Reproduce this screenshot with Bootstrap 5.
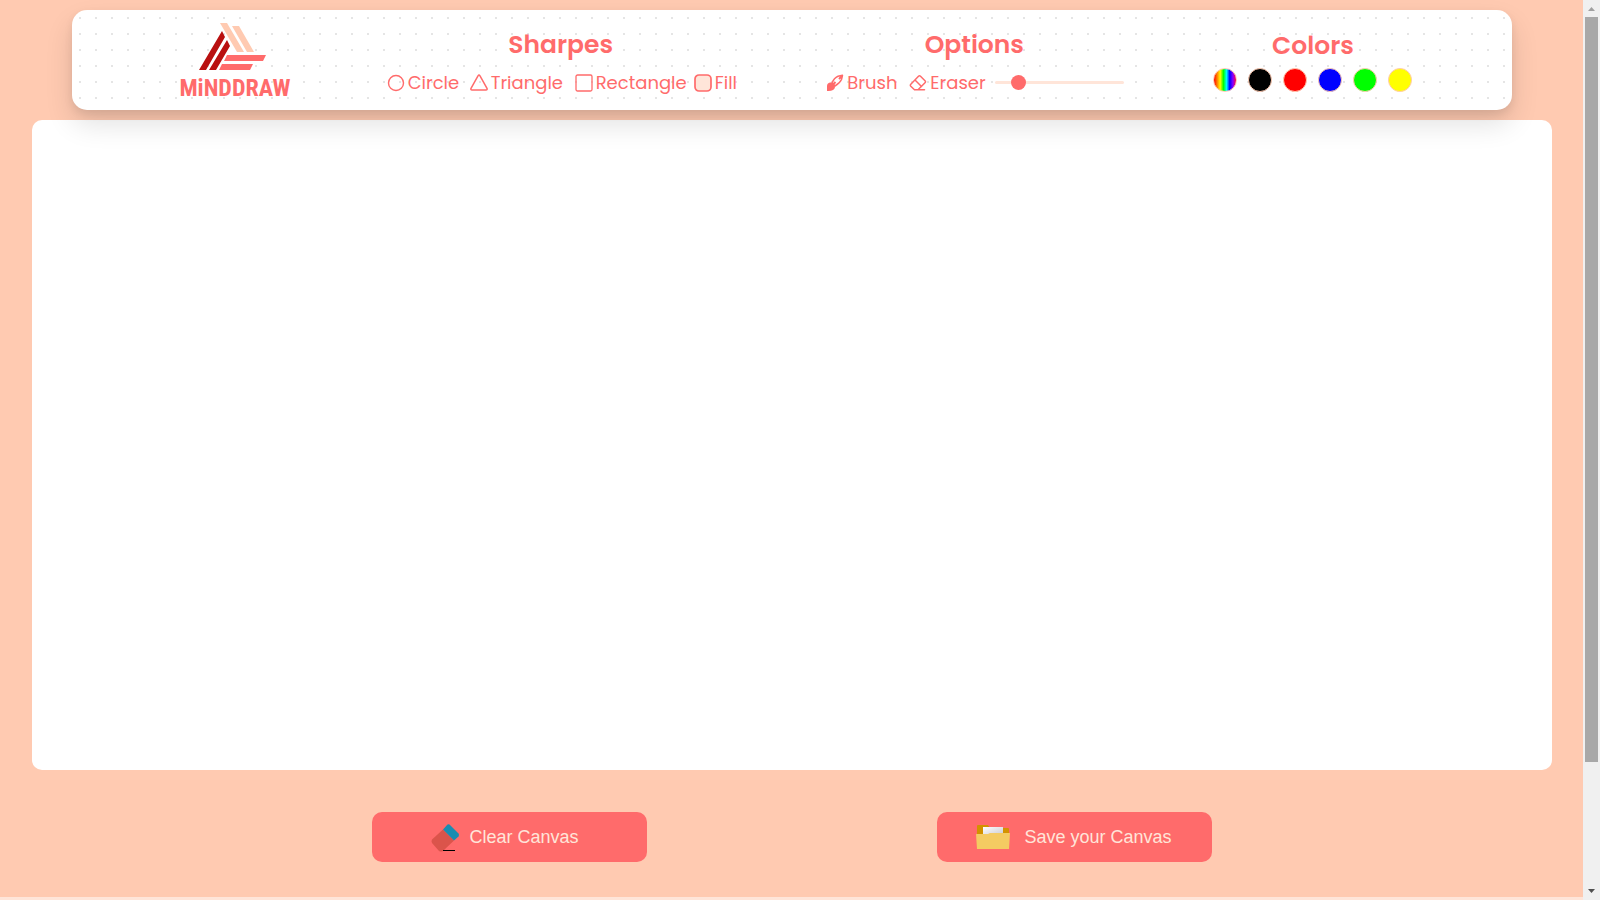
<!DOCTYPE html>
<html lang="en">
<head>
<meta charset="utf-8">
<meta name="viewport" content="width=device-width, initial-scale=1">
<title>MindDraw</title>
<link rel="stylesheet" href="https://cdn.jsdelivr.net/npm/bootstrap@5.3.0/dist/css/bootstrap.min.css">
<style>
:root { --coral: #ff6b6b; --peach: #ffcab1; --cream: #ffe5d9; }
body { background: var(--cream); font-family: Poppins, Inter, sans-serif; color: var(--coral); }
.studio { background: var(--peach); min-height: 0; }
.toolbar {
  height: 100px; margin: 10px 71px 10px 72px; padding: 0 99px 0 105px; border-radius: 15px;
  background: #fff radial-gradient(#e5e5e5 1px, transparent 1px) 0 0 / 16px 16px;
  box-shadow: 0 14px 28px rgba(0, 0, 0, .12), 0 4px 8px rgba(0, 0, 0, .08);
}
.brand { width: 116px; margin-right: 3px; color: var(--coral); }
.brand:hover { color: var(--coral); }
.brand-name { font: bold 24px/28px "Roboto Condensed", "Open Sans Condensed", "Liberation Sans", sans-serif; }
.tool-title { font-size: 25px; line-height: 30px; font-weight: 600; padding-top: 20px; }
.tool-row { height: 24px; margin-top: 11px; padding-left: 1px; }
.shapes { width: 350px; }
.options { width: 298px; }
.colors { width: 200px; }
.colors .tool-title { padding-top: 21px; }
.shape-list { display: grid; grid-template-columns: 83px 105px 119px auto; }
.option-list { display: grid; grid-template-columns: 83px 86px 129px; }
.tool { display: flex; align-items: center; gap: 3px; padding: 0; border: 0; background: none; color: inherit; font-size: 18px; line-height: 24px; white-space: nowrap; }
.tool svg { width: 18px; height: 18px; flex: none; }
.size-slot { height: 22px; }
.brush-size { appearance: none; display: block; width: 129px; height: 15px; margin: 0; background: none; }
.brush-size::-webkit-slider-runnable-track { height: 3px; border-radius: 3px; background: var(--cream); }
.brush-size::-webkit-slider-thumb { appearance: none; width: 15px; height: 15px; margin-top: -6px; border-radius: 50%; background: var(--coral); }
.swatches { gap: 11px; margin-top: 7px; }
.swatch { width: 24px; height: 24px; padding: 0; border: 1px solid var(--peach); border-radius: 50%; }
.swatch-rainbow { background: linear-gradient(90deg, red, #ff8000, #ff0, #0f0, #0ff, #00f, #80f, #f04); }
.swatch-black { background: #000; }
.swatch-red { background: #f00; }
.swatch-blue { background: #00f; }
.swatch-green { background: #0f0; }
.swatch-yellow { background: #ff0; }
.board { flex: 1 1 0; min-height: 0; margin: 0 31px 0 32px; background: #fff; border-radius: 10px; }
.board canvas { display: block; width: 100%; height: 100%; }
.actions { gap: 290px; padding: 42px 0 35px; }
.action { width: 275px; height: 50px; border: 0; border-radius: 10px; background: var(--coral); color: var(--cream); font: 18px/24px "Liberation Sans", sans-serif; }
.action-save { gap: 14px; }
.next-section { height: 3px; }
.scroll-track { width: 17px; padding: 0 2px; background: #f0f0f0; }
.scroll-arrow { height: 17px; }
.scroll-thumb { height: 86%; background: #a8a8a8; }
</style>
</head>
<body>
<div class="d-flex vh-100 overflow-hidden">
  <div class="d-flex flex-column flex-grow-1">
    <main class="studio d-flex flex-column flex-grow-1">
      <header class="toolbar d-flex justify-content-between flex-shrink-0 position-relative">
        <a href="#" class="brand text-decoration-none d-flex flex-column align-items-center">
          <svg class="mt-2" width="116" height="56" viewBox="178 18 116 56" aria-hidden="true">
            <path fill="#ffcab1" d="M221 23h7l17 29h-7zM233 26h7l15 26h-7z"/>
            <path fill="#b91010" d="M223 31l3 6-19 33h-7zM228 40l3 6-14 24h-7z"/>
            <path fill="#ff6b6b" d="M228 55h39l-3 6h-39zM223 64h31l-3 6h-31z"/>
          </svg>
          <span class="brand-name">MiNDDRAW</span>
        </a>
        <section class="shapes">
          <h2 class="tool-title text-center mb-0">Sharpes</h2>
          <div class="shape-list tool-row">
            <button class="tool" type="button"><svg viewBox="0 0 18 18" fill="none" stroke="currentColor" stroke-width="1.4"><circle cx="9" cy="9" r="7.5"/></svg>Circle</button>
            <button class="tool" type="button"><svg viewBox="0 0 18 18" fill="none" stroke="currentColor" stroke-width="1.5" stroke-linejoin="round"><path d="M8 1.8q1-1.5 2 0l7 12.500q.5 1.700-1 1.700H2q-1.500 0-1-1.700z"/></svg>Triangle</button>
            <button class="tool" type="button"><svg viewBox="0 0 18 18" fill="none" stroke="currentColor" stroke-width="1.3"><rect x="1" y="1" width="16" height="16" rx="1.5"/></svg>Rectangle</button>
            <button class="tool" type="button"><svg viewBox="0 0 18 18" fill="#ffe5d9" stroke="currentColor" stroke-width="1.7"><rect x="1" y="1" width="16" height="16" rx="4"/></svg>Fill</button>
          </div>
        </section>
        <section class="options">
          <h2 class="tool-title text-center mb-0">Options</h2>
          <div class="option-list tool-row">
            <button class="tool" type="button"><svg viewBox="0 0 18 18" fill="none" stroke="currentColor" stroke-width="1.5" stroke-linejoin="round"><path fill="currentColor" stroke="none" d="M1 17V12Q1 9 4 8.500Q6.500 8 8.500 10.500Q10 14 7 16Q5 17.300 1 17z"/><path d="M6 9Q8 4 12 2.300L16.500 1.300L15.500 5.500Q14 9 9 12z"/><path stroke-width="2" d="M7 10.500 9.500 8M13 5 16 2"/></svg>Brush</button>
            <button class="tool" type="button"><svg viewBox="0 0 18 18" fill="none" stroke="currentColor" stroke-width="1.5" stroke-linejoin="round" stroke-linecap="round"><path d="M9.500 2.300Q10.500 1.300 11.500 2.300L16 6.800Q17 7.800 16 8.800L9 15.800H5.500L1.800 12.200Q.9 11.200 1.800 10.200zM6 6l6.500 6.500M9 15.800h6.500"/></svg>Eraser</button>
            <span class="size-slot d-flex align-items-center"><input class="brush-size" type="range" min="1" max="30" value="5" aria-label="Brush size"></span>
          </div>
        </section>
        <section class="colors">
          <h2 class="tool-title text-center mb-0">Colors</h2>
          <div class="swatches d-flex">
            <button class="swatch swatch-rainbow" type="button" aria-label="Custom color"></button>
            <button class="swatch swatch-black" type="button" aria-label="Black"></button>
            <button class="swatch swatch-red" type="button" aria-label="Red"></button>
            <button class="swatch swatch-blue" type="button" aria-label="Blue"></button>
            <button class="swatch swatch-green" type="button" aria-label="Green"></button>
            <button class="swatch swatch-yellow" type="button" aria-label="Yellow"></button>
          </div>
        </section>
      </header>
      <div class="board"><canvas aria-label="Drawing canvas"></canvas></div>
      <div class="actions d-flex justify-content-center flex-shrink-0">
        <button class="action d-flex align-items-center justify-content-center gap-2 pe-3" type="button">
          <svg width="32" height="32" viewBox="0 0 32 32" aria-hidden="true"><path fill="#db544b" d="M14 8.500 25 19.500 14 30Q12 31 10 30L3 22Q2 20 3 18.500z"/><path fill="#1b8cb1" d="M14 8.500 18.500 3.500Q19.500 3 20.500 3.500L29.500 12.500Q30.500 14 29.500 15.500L25 19.500z"/><path d="M14 29h12v1H14z"/></svg>
          Clear Canvas
        </button>
        <button class="action action-save d-flex align-items-center justify-content-center" type="button">
          <svg width="34" height="26" viewBox="0 0 34 26" aria-hidden="true"><defs><linearGradient id="paper" x2="1" y2="1"><stop stop-color="#fff"/><stop offset="1" stop-color="#c8c8d0"/></linearGradient></defs><path fill="#d39200" d="M1 2q0-1 1-1h10l2 3h18q1 0 1 1v10H1z"/><path fill="url(#paper)" d="M7 3h20v9H7z"/><path fill="#f4cb62" d="M0 10h12l2-1h20l-1 16H1z"/></svg>
          Save your Canvas
        </button>
      </div>
    </main>
    <div class="next-section flex-shrink-0"></div>
  </div>
  <div class="scroll-track d-flex flex-column flex-shrink-0" aria-hidden="true">
    <svg class="scroll-arrow flex-shrink-0" viewBox="0 0 13 17"><path fill="#a0a0a0" d="M3 11h7L6.500 7z"/></svg>
    <div class="flex-grow-1"><div class="scroll-thumb"></div></div>
    <svg class="scroll-arrow flex-shrink-0" viewBox="0 0 13 17"><path fill="#505050" d="M3 6h7l-3.500 4z"/></svg>
  </div>
</div>
<script src="https://cdn.jsdelivr.net/npm/bootstrap@5.3.0/dist/js/bootstrap.bundle.min.js"></script>
</body>
</html>
